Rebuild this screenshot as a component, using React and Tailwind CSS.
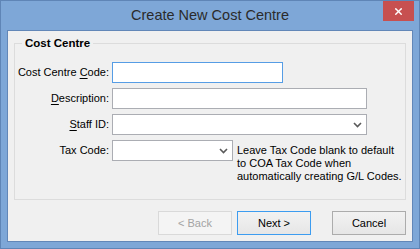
import { X } from "lucide-react";

const font = { fontFamily: '"Liberation Sans", Arial, sans-serif' };

function Chevron() {
  return (
    <svg width="9" height="6" viewBox="0 0 9 6" className="shrink-0">
      <path d="M1 1 L4.5 4.5 L8 1" fill="none" stroke="#5a5a5a" strokeWidth="1.6" />
    </svg>
  );
}

function Row({ label, children, top = "items-center" }) {
  return (
    <div className={`flex ${top}`}>
      <label className="w-[95px] pr-[1px] text-right text-[11px] leading-[21px] text-black shrink-0">{label}</label>
      <div className="ml-[2px] flex items-start">{children}</div>
    </div>
  );
}

export default function App() {
  return (
    <div className="w-[420px] h-[249px] bg-[#7ea7d7] border border-[#5f85b6] flex flex-col" style={font}>
      {/* title bar */}
      <div className="relative h-[29px] shrink-0 flex items-center justify-center">
        <span className="text-[14.5px] leading-[29px] text-[#2b2b2b]">Create New Cost Centre</span>
        <button className="absolute right-[5px] top-0 w-[31px] h-[20px] bg-[#c75050] flex items-center justify-center">
          <X size={11} strokeWidth={3.2} color="#ffffff" />
        </button>
      </div>

      {/* client area */}
      <div className="mx-[6px] mb-[6px] flex-1 border border-[#6287b8] bg-[#f0f0f0] flex flex-col">
        <fieldset className="mx-[6px] mt-[5px] border border-[#dcdcdc] px-0 pt-[12px] pb-[16px]">
          <legend className="ml-[7px] px-[3px] text-[11.5px] font-bold leading-[14px] text-black">Cost Centre</legend>
          <div className="flex flex-col gap-[5px]">
            <Row label={<>Cost Centre <u className="underline-offset-2">C</u>ode:</>}>
              <div className="w-[171px] h-[21px] bg-white border border-[#569de5]" />
            </Row>
            <Row label={<><u className="underline-offset-2">D</u>escription:</>}>
              <div className="w-[255px] h-[21px] bg-white border border-[#abadb3]" />
            </Row>
            <Row label={<><u className="underline-offset-2">S</u>taff ID:</>}>
              <div className="w-[255px] h-[21px] bg-white border border-[#abadb3] flex items-center justify-end pr-[4px]">
                <Chevron />
              </div>
            </Row>
            <Row label="Tax Code:" top="items-start">
              <div className="w-[121px] h-[21px] bg-white border border-[#abadb3] flex items-center justify-end pr-[4px]">
                <Chevron />
              </div>
              <p className="ml-[4px] mt-[4px] text-[11px] leading-[13px] text-black">
                Leave Tax Code blank to default
                <br />
                to COA Tax Code when
                <br />
                automatically creating G/L Codes.
              </p>
            </Row>
          </div>
        </fieldset>

        <div className="mt-[11px] mr-[6px] flex justify-end">
          <button
            disabled
            className="w-[74px] h-[24px] border border-[#d9d9d9] bg-[#f4f4f4] text-[11px] text-[#a3a3a3]"
          >
            &lt; Back
          </button>
          <button className="ml-[5px] w-[74px] h-[24px] border border-[#3c9cf0] bg-gradient-to-b from-[#f2f2f2] to-[#e6e6e6] text-[11px] text-black">
            Next &gt;
          </button>
          <button className="ml-[21px] w-[74px] h-[24px] border border-[#acacac] bg-gradient-to-b from-[#f2f2f2] to-[#e6e6e6] text-[11px] text-black">
            Cancel
          </button>
        </div>
      </div>
    </div>
  );
}
